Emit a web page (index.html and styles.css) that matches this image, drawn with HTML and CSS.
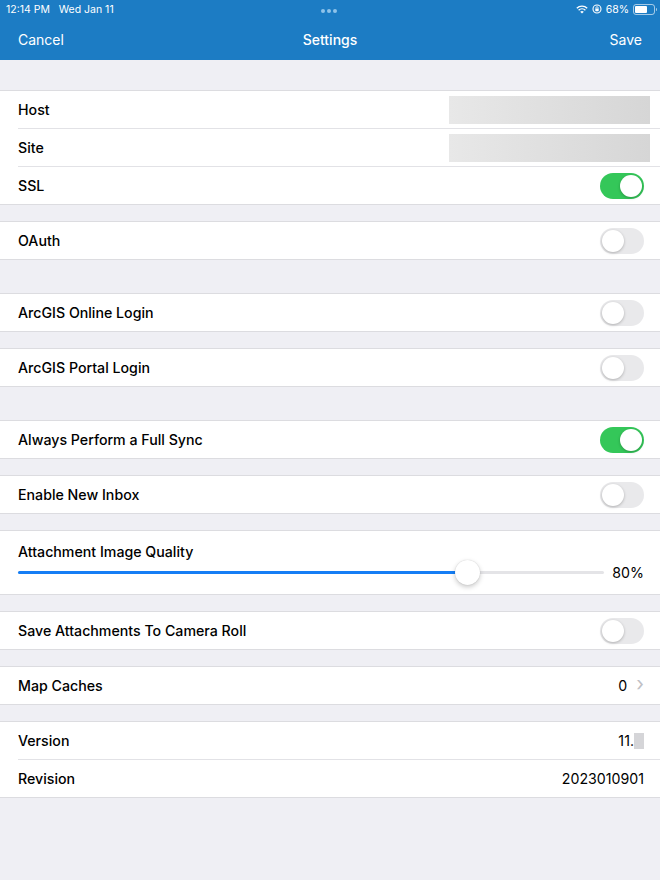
FILE: index.html
```html
<!DOCTYPE html>
<html>
<head>
    <meta http-equiv="Content-Type" content="text/html; charset=UTF-8">
    <title>Settings</title>
    <link rel="stylesheet" href="styles.css">
</head>
<body>
<div class="top">
    <div class="status">
        <span class="time">12:14 PM&nbsp;&nbsp;&nbsp;Wed Jan 11</span>
        <span class="dots"><i></i><i></i><i></i></span>
        <span class="sys">
            <svg width="12" height="9" viewBox="0 0 12 9"><path d="M6 8.6 L4.2 6.8 A2.6 2.6 0 0 1 7.8 6.8 Z" fill="#fff"/><path d="M2.6 5.2 A4.9 4.9 0 0 1 9.4 5.2" stroke="#fff" stroke-width="1.4" fill="none"/><path d="M0.8 3.3 A7.4 7.4 0 0 1 11.2 3.3" stroke="#fff" stroke-width="1.4" fill="none"/></svg>
            <svg width="10" height="10" viewBox="0 0 10 10"><circle cx="5" cy="5" r="4" stroke="#fff" stroke-width="1.1" fill="none"/><rect x="3.3" y="4.6" width="3.4" height="2.6" rx="0.4" fill="#fff"/><path d="M3.9 4.7 V3.8 A1.1 1.1 0 0 1 6.1 3.8 V4.7" stroke="#fff" stroke-width="0.8" fill="none"/></svg>
            <span>68%</span>
            <span class="battery"><span class="level"></span></span>
        </span>
    </div>
    <div class="nav">
        <span>Cancel</span>
        <span class="title">Settings</span>
        <span>Save</span>
    </div>
</div>

<div class="page">
    <div class="group">
        <div class="row"><span class="label">Host</span><span class="blur"></span></div>
        <div class="row"><span class="label">Site</span><span class="blur"></span></div>
        <div class="row"><span class="label">SSL</span><span class="switch on"></span></div>
    </div>

    <div class="group">
        <div class="row"><span class="label">OAuth</span><span class="switch"></span></div>
    </div>

    <div class="group wide">
        <div class="row"><span class="label">ArcGIS Online Login</span><span class="switch"></span></div>
    </div>

    <div class="group">
        <div class="row"><span class="label">ArcGIS Portal Login</span><span class="switch"></span></div>
    </div>

    <div class="group wide">
        <div class="row"><span class="label">Always Perform a Full Sync</span><span class="switch on"></span></div>
    </div>

    <div class="group">
        <div class="row"><span class="label">Enable New Inbox</span><span class="switch"></span></div>
    </div>

    <div class="group">
        <div class="slider-row">
            <span class="label">Attachment Image Quality</span>
            <div class="slider-line">
                <div class="track">
                    <div class="fill" style="width:76.6%"></div>
                    <div class="knob" style="left:76.6%"></div>
                </div>
                <span class="value">80%</span>
            </div>
        </div>
    </div>

    <div class="group">
        <div class="row"><span class="label">Save Attachments To Camera Roll</span><span class="switch"></span></div>
    </div>

    <div class="group">
        <div class="row"><span class="label">Map Caches</span><span class="value">0<span class="chev">&#x203A;</span></span></div>
    </div>

    <div class="group">
        <div class="row"><span class="label">Version</span><span class="value">11.<span class="hide"></span></span></div>
        <div class="row"><span class="label">Revision</span><span class="value">2023010901</span></div>
    </div>
</div>
</body>
</html>
```

FILE: styles.css
```css
body {
    margin: 0;
    background-color: #efeff4;
    font-family: Inter, "Liberation Sans", sans-serif;
    color: #000;
    width: 660px;
    height: 880px;
    overflow: hidden;
}

.top {
    background-color: #1c7cc4;
    color: #fff;
    height: 60px;
}

.status {
    height: 18px;
    display: flex;
    align-items: center;
    justify-content: space-between;
    padding: 0 5px 0 6px;
    font-size: 10.5px;
    position: relative;
}

.status .time {
    padding-top: 1px;
}

.dots {
    position: absolute;
    left: 321px;
    top: 9px;
    display: flex;
    gap: 2px;
}

.dots i {
    width: 4px;
    height: 4px;
    border-radius: 50%;
    background-color: #8fc3ea;
}

.sys {
    display: flex;
    align-items: center;
    gap: 4px;
}

.battery {
    border: 1px solid rgba(255,255,255,0.6);
    border-radius: 3px;
    padding: 1px;
    box-sizing: border-box;
    position: relative;
    display: inline-block;
    width: 22px;
    height: 11px;
}

.battery:after {
    content: "";
    position: absolute;
    right: -3px;
    top: 3px;
    width: 1.5px;
    height: 3px;
    background-color: rgba(255,255,255,0.6);
    border-radius: 0 1px 1px 0;
}

.battery .level {
    display: block;
    width: 68%;
    height: 100%;
    background-color: #fff;
    border-radius: 1px;
}

.nav {
    height: 42px;
    display: flex;
    align-items: center;
    justify-content: space-between;
    padding: 0 18px;
    font-size: 14px;
    position: relative;
}

.nav .title {
    position: absolute;
    left: 0;
    right: 0;
    text-align: center;
    font-weight: 500;
}

.page {
    padding-top: 14px;
}

.group {
    background-color: #fff;
    border-top: 1px solid #dcdce0;
    border-bottom: 1px solid #dcdce0;
    margin-top: 16px;
    padding-left: 18px;
}

.group.wide {
    margin-top: 33px;
}

.row {
    height: 37px;
    display: flex;
    align-items: center;
    justify-content: space-between;
    padding-right: 16px;
    border-top: 1px solid #e2e2e6;
}

.row:first-child {
    border-top: none;
}

.label {
    font-size: 14.2px;
    font-weight: 500;
}

.value {
    font-size: 14.2px;
    display: flex;
    align-items: center;
}

.chev {
    color: #c0c0c5;
    font-size: 20px;
    margin-left: 9px;
    margin-top: -3px;
}

.hide {
    display: inline-block;
    width: 10px;
    height: 16px;
    background-color: #d5d5d8;
}

.blur {
    width: 201px;
    height: 28px;
    margin-right: -6px;
    background: linear-gradient(to right, #e8e8e8, #d6d6d6);
}

.switch {
    width: 44px;
    height: 26px;
    border-radius: 13px;
    background-color: #e9e9eb;
    position: relative;
}

.switch:after {
    content: "";
    position: absolute;
    left: 2px;
    top: 2px;
    width: 22px;
    height: 22px;
    border-radius: 50%;
    background-color: #fff;
    box-shadow: 0 1px 3px rgba(0,0,0,0.25);
}

.switch.on {
    background-color: #34c759;
}

.switch.on:after {
    left: 20px;
}

.slider-row {
    height: 63px;
    padding-right: 16px;
    box-sizing: border-box;
    padding-top: 10px;
}

.slider-line {
    display: flex;
    align-items: center;
    margin-top: 3px;
}

.track {
    flex: 1;
    height: 3px;
    background-color: #e4e4e7;
    border-radius: 2px;
    position: relative;
}

.fill {
    height: 100%;
    background-color: #157ef5;
    border-radius: 2px;
}

.knob {
    position: absolute;
    top: -11px;
    width: 25px;
    height: 25px;
    margin-left: -12px;
    border-radius: 50%;
    background-color: #fff;
    box-shadow: 0 2px 5px rgba(0,0,0,0.22), 0 0 1px rgba(0,0,0,0.2);
}

.slider-line .value {
    margin-left: 10px;
    width: 30px;
    justify-content: flex-end;
}
```
